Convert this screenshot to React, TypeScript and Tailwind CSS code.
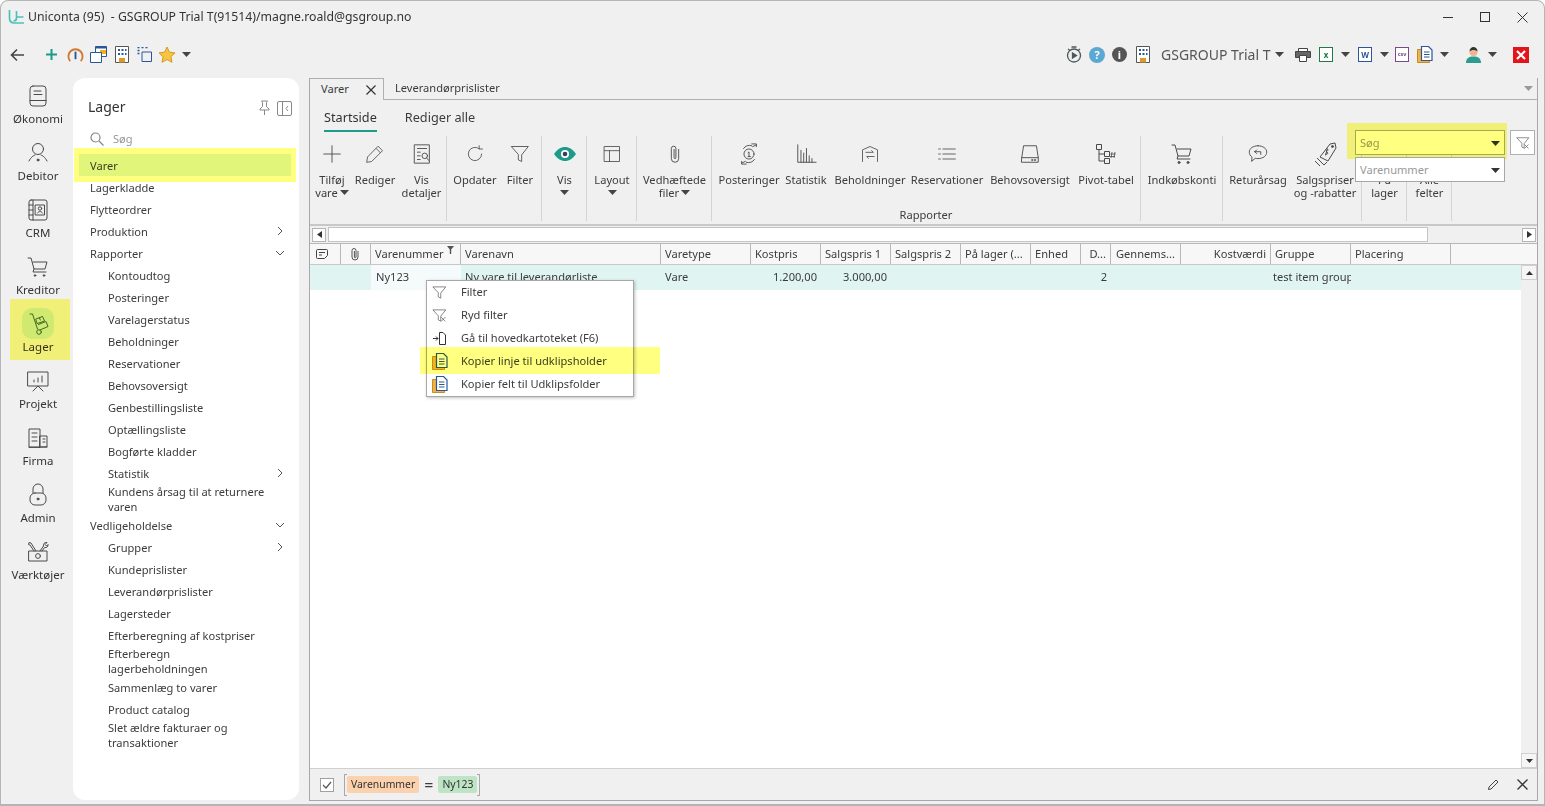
import React from "react";

type SP = { s?: number; c?: string; sw?: number; children: React.ReactNode };
const S = ({ s = 24, c = "#4a4a4a", sw = 1, children }: SP) => (
  <svg width={s} height={s} viewBox="0 0 24 24" fill="none" stroke={c} strokeWidth={sw} strokeLinecap="round" strokeLinejoin="round" className="shrink-0">
    {children}
  </svg>
);
const Caret = ({ c = "#444" }: { c?: string }) => (
  <svg width="9" height="5" viewBox="0 0 9 5" className="shrink-0"><path d="M0 0h9L4.500 5z" fill={c} /></svg>
);
const Chev = ({ down }: { down?: boolean }) => (
  <svg width="10" height="10" viewBox="0 0 10 10" fill="none" stroke="#555" strokeWidth="1">
    {down ? <path d="M1 3l4 4 4-4" /> : <path d="M3 1l4 4-4 4" />}
  </svg>
);
const Funnel = ({ s = 20, x }: { s?: number; x?: boolean }) => (
  <S s={s} c="#444">
    <path d="M2 3h20l-8 10v8l-4-2v-6z" />
    {x && <path d="M15 15l6 6M21 15l-6 6" />}
  </S>
);
const CopyDoc = () => (
  <svg width="16" height="17" viewBox="0 0 16 17" className="shrink-0">
    <path d="M.500 3.500h5v11h7v2h-12z" fill="#eeb44a" stroke="#c98a1f" strokeWidth="1" />
    <path d="M4.500 .500h7l3.500 3.500v10.500h-10.500z" fill="#fff" stroke="#2b579a" strokeWidth="1.200" />
    <path d="M7 6h5.500M7 8.500h5.500M7 11h5.500" stroke="#2b579a" strokeWidth="1" />
  </svg>
);
const Building = () => (
  <svg width="14" height="17" viewBox="0 0 14 17" className="shrink-0">
    <path d="M.500 .500h13v16h-13z" fill="#fff" stroke="#555" />
    <path d="M3 3h2v2H3zM6.500 3h2v2h-2zM10 3h1.500v2H10zM3 7h2v2H3zM6.500 7h2v2h-2zM10 7h1.500v2H10z" fill="#2b579a" />
    <path d="M4 12h6v4.500H4z" fill="#d99a2b" />
  </svg>
);

const railIcons: Record<string, React.ReactNode> = {
  "Økonomi": <><rect x="4" y="2" width="16" height="20" rx="3" /><path d="M4 16.500h16M8 7h7M8 10.500h8" /></>,
  Debitor: <><circle cx="12" cy="8" r="5.500" /><path d="M3 20c2-4 4.500-5.500 6-6M21 20c-2-4-4.500-5.500-6-6" /><circle cx="12" cy="19" r="1" fill="#555" /></>,
  CRM: <><rect x="3" y="2" width="18" height="20" rx="2" /><path d="M7 2v20M3 7h4M3 12h4M3 17h4" /><rect x="9.500" y="7" width="9" height="10" /><circle cx="14" cy="10.500" r="1.700" /><path d="M11.500 15c1-2 4-2 5 0" /></>,
  Kreditor: <><path d="M2 3h3l3 11h11l2-7H7" /><path d="M8 14l-1 3h13" /><circle cx="9" cy="20.500" r=".8" fill="#555" /><circle cx="18" cy="20.500" r=".8" fill="#555" /></>,
  Lager: <><path d="M4 2h2.500l5 15" /><circle cx="13" cy="20" r="2.300" /><path d="M10 7l6.500-2.500 2 4.500-7 2.500zM12.500 12.500l7.500-3 2 5-8 3.500" /><path d="M13.500 6l.8 2" /></>,
  Projekt: <><rect x="2" y="3" width="20" height="14" /><path d="M8 13v-2M12 13V9M16 13V7M7 22l5-5 5 5" /></>,
  Firma: <><path d="M3 21V3h11v18zM14 10h7v11h-7zM3 21h18M6 7h5M6 11h5M6 15h5M17 13h2M17 16h2" /></>,
  Admin: <><rect x="4" y="10" width="16" height="12" rx="5" /><path d="M7 10V6a5 5 0 0 1 10 0v4" /><circle cx="12" cy="16" r="1" fill="#555" /></>,
  "Værktøjer": <><path d="M3 11h18v10H3z" /><circle cx="12" cy="16" r="2.400" /><path d="M8 11L4 5l-1.500-.5L3 2.500l2 .5 5 8M14 11l3.500-5c-.5-2 1-4 3.500-3.500L19 4.500l1.500 1.500 1.500-1.500c.5 2-1.500 3.500-3.500 3L16 11" /></>,
};

const RailItem = ({ name }: { name: string }) => (
  <div className="flex flex-col items-center h-[57px]">
    {name === "Lager" ? (
      <div className="w-8 h-[31px] rounded-[10px] bg-[#cfe9e2] flex items-center justify-center mt-[1px]"><S c="#3f6a4a" s={24}>{railIcons[name]}</S></div>
    ) : (
      <div className="h-[31px] flex items-center mt-[1px]"><S>{railIcons[name]}</S></div>
    )}
    <span className="leading-4 text-[11.500px] text-[#333]">{name}</span>
  </div>
);

const nav: { t: string; i?: number; h?: number; w?: number; a?: "r" | "d" }[] = [
  { t: "Varer" }, { t: "Lagerkladde" }, { t: "Flytteordrer" }, { t: "Produktion", a: "r" }, { t: "Rapporter", a: "d" },
  { t: "Kontoudtog", i: 1 }, { t: "Posteringer", i: 1 }, { t: "Varelagerstatus", i: 1 }, { t: "Beholdninger", i: 1 },
  { t: "Reservationer", i: 1 }, { t: "Behovsoversigt", i: 1 }, { t: "Genbestillingsliste", i: 1 }, { t: "Optællingsliste", i: 1 },
  { t: "Bogførte kladder", i: 1 }, { t: "Statistik", i: 1, a: "r" }, { t: "Kundens årsag til at returnere varen", i: 1, h: 30, w: 170 },
  { t: "Vedligeholdelse", a: "d" }, { t: "Grupper", i: 1, a: "r" }, { t: "Kundeprislister", i: 1 }, { t: "Leverandørprislister", i: 1 },
  { t: "Lagersteder", i: 1 }, { t: "Efterberegning af kostpriser", i: 1 }, { t: "Efterberegn lagerbeholdningen", i: 1, h: 30, w: 120 },
  { t: "Sammenlæg to varer", i: 1 }, { t: "Product catalog", i: 1 }, { t: "Slet ældre fakturaer og transaktioner", i: 1, h: 30, w: 170 },
];

const Item = ({ w, icon, l1, l2, caret }: { w: number; icon: React.ReactNode; l1: string; l2?: string; caret?: "inline" | "below" }) => (
  <div className="flex flex-col items-center shrink-0" style={{ width: w }}>
    <div className="h-[24px] flex items-center justify-center">{icon}</div>
    <div className="mt-[7px] leading-[13px] whitespace-nowrap text-center">{l1}</div>
    {l2 && (
      <div className="leading-[13px] whitespace-nowrap flex items-center gap-[2px]">
        {l2}
        {caret === "inline" && <Caret />}
      </div>
    )}
    {caret === "below" && <div className="mt-[4px]"><Caret /></div>}
  </div>
);

const Group = ({ w, children, label }: { w: number; children: React.ReactNode; label?: string }) => (
  <div className="relative h-[85px] mt-[1px] border-r border-[#d4d4d4] shrink-0 flex pt-[6px]" style={{ width: w }}>
    {children}
    {label && <div className="absolute left-0 right-0 bottom-0 text-center leading-[13px]">{label}</div>}
  </div>
);

const columns: { t: string; w: number; r?: boolean; c?: boolean }[] = [
  { t: "", w: 31 }, { t: "", w: 30 }, { t: "Varenummer", w: 90 }, { t: "Varenavn", w: 200 }, { t: "Varetype", w: 90 },
  { t: "Kostpris", w: 70 }, { t: "Salgspris 1", w: 70 }, { t: "Salgspris 2", w: 70 }, { t: "På lager (...", w: 70 }, { t: "Enhed", w: 50 },
  { t: "D...", w: 30, r: true }, { t: "Gennems...", w: 70, c: true }, { t: "Kostværdi", w: 90, r: true }, { t: "Gruppe", w: 80 }, { t: "Placering", w: 100 },
];
const row: { t: string; w: number; r?: boolean; bg?: string; pl?: number }[] = [
  { t: "", w: 61 }, { t: "Ny123", w: 90, bg: "bg-[#f4fbfa]", pl: 5 }, { t: "Ny vare til leverandørliste", w: 200 }, { t: "Vare", w: 90 },
  { t: "1.200,00", w: 70, r: true }, { t: "3.000,00", w: 70, r: true }, { t: "", w: 70 }, { t: "", w: 70 }, { t: "", w: 50 },
  { t: "2", w: 30, r: true }, { t: "", w: 70 }, { t: "", w: 90 }, { t: "test item group", w: 80, pl: 2 }, { t: "", w: 100 },
];

const menu: { t: string; icon: React.ReactNode }[] = [
  { t: "Filter", icon: <Funnel s={15} /> },
  { t: "Ryd filter", icon: <Funnel s={15} x /> },
  {
    t: "Gå til hovedkartoteket (F6)",
    icon: (
      <svg width="15" height="15" viewBox="0 0 15 15" fill="none" stroke="#333">
        <path d="M1 7.500h5M4 5.500l2 2-2 2M7.500 13.500v-12h3.500l2.500 2.500v9.500z" />
      </svg>
    ),
  },
  { t: "Kopier linje til udklipsholder", icon: <CopyDoc /> },
  { t: "Kopier felt til Udklipsfolder", icon: <CopyDoc /> },
];

export default function App() {
  return (
    <div className="relative w-[1545px] h-[806px] overflow-hidden bg-white text-[11.100px] text-[#3c3c3c]" style={{ fontFamily: '"Noto Sans", sans-serif' }}>
      <div className="w-full h-full flex flex-col bg-[#f0f0f0] border border-[#b5b5b5] border-b-[2px] rounded-t-[8px]">
        {/* title bar */}
        <div className="h-[32px] shrink-0 flex items-center pl-[7px] pr-[16px]">
          <svg width="17" height="17" viewBox="0 0 17 17" fill="none" stroke="#4fc0b8" strokeWidth="1.700" className="shrink-0">
            <path d="M1.500 1v8c0 3 2 5 5 5h9.500M8.500 2v7c0 2-1 3-3 3M8.500 8h7" />
          </svg>
          <span className="ml-[3px] text-[12.250px] whitespace-pre text-[#333]">Uniconta (95)  - GSGROUP Trial T(91514)/magne.roald@gsgroup.no</span>
          <div className="ml-auto flex items-center gap-[27px]">
            <div className="w-[10px] h-px bg-[#333]" />
            <div className="w-[10px] h-[10px] border border-[#333]" />
            <svg width="11" height="11" viewBox="0 0 11 11" stroke="#333" strokeWidth="1"><path d="M.500 .500l10 10M10.500 .500l-10 10" /></svg>
          </div>
        </div>
        {/* toolbar */}
        <div className="h-[45px] shrink-0 flex items-center pl-[9px] pr-[15px] pb-[2px]">
          <svg width="15" height="14" viewBox="0 0 15 14" fill="none" stroke="#444" strokeWidth="1.600"><path d="M14 7H2M7 1.500L1.500 7 7 12.500" /></svg>
          <div className="ml-[20px] flex items-center">
            <svg width="13" height="13" viewBox="0 0 13 13" stroke="#1d9a8a" strokeWidth="2"><path d="M6.500 1v11M1 6.500h11" /></svg>
            <svg width="17" height="17" viewBox="0 0 18 18" fill="none" className="ml-[9px]"><path d="M3.500 16A7.500 7.500 0 1 1 14.500 16" stroke="#d07a2d" strokeWidth="2" /><path d="M9 6v8" stroke="#2b579a" strokeWidth="2" /></svg>
            <svg width="17" height="17" viewBox="0 0 17 17" className="ml-[6px]"><path d="M5.500 .500h11v10h-11z" fill="#fff" stroke="#2b579a" /><path d="M5.500 .500h11v2h-11z" fill="#2b579a" /><path d="M10 4h6v4h-6z" fill="#f2b01e" /><path d="M.500 6.500h11v10h-11z" fill="#fff" stroke="#2b579a" /></svg>
            <div className="ml-[8px]"><Building /></div>
            <svg width="15" height="15" viewBox="0 0 15 15" fill="none" stroke="#2b579a" className="ml-[8px]"><path d="M5 5h9.500v9.500H5z" /><path d="M.500 .500h2M4.500 .500h2M8.500 .500h2M.500 3.500h2M.500 6.500h2" strokeWidth="1.500" /></svg>
            <svg width="18" height="18" viewBox="0 0 18 18" className="ml-[6px]"><path d="M9 1l2.400 5.200 5.600.7-4.100 3.800 1.100 5.600L9 13.500l-5 2.800 1.100-5.600L1 6.900l5.600-.7z" fill="#f6c544" stroke="#d69a1c" /></svg>
            <div className="ml-[6px]"><Caret /></div>
          </div>
          <div className="ml-auto flex items-center">
            <svg width="16" height="17" viewBox="0 0 16 17" fill="none" stroke="#4a5a5a" strokeWidth="1.300"><circle cx="8" cy="9.500" r="6.500" /><path d="M5.500 1h5M2 3l2 1.500M14 3l-2 1.500" /><path d="M6.500 7l4 2.500-4 2.500z" fill="#4a5a5a" /></svg>
            <div className="ml-[7px] w-[16px] h-[16px] rounded-full bg-[#5ba8d2] text-white text-[11px] font-bold flex items-center justify-center leading-none">?</div>
            <div className="ml-[7px] w-[15px] h-[15px] rounded-full bg-[#555] text-white text-[11px] font-bold flex items-center justify-center leading-none">i</div>
            <div className="ml-[9px]"><Building /></div>
            <span className="ml-[11px] text-[14px] text-[#555] whitespace-nowrap w-[109px]">GSGROUP Trial T</span>
            <div className="ml-[5px]"><Caret /></div>
            <svg width="16" height="14" viewBox="0 0 16 14" className="ml-[11px]"><path d="M3.500 3V.500h9V3" fill="#fff" stroke="#444" /><path d="M.500 3.500h15v6h-15z" fill="#666" stroke="#444" /><path d="M4.500 7.500h7v6h-7z" fill="#fff" stroke="#444" /></svg>
            <div className="ml-[8px] w-[14px] h-[15px] border border-[#1f7a45] bg-white text-[#1f7a45] text-[8px] font-bold flex items-center justify-center leading-none">x</div>
            <div className="ml-[8px]"><Caret /></div>
            <div className="ml-[8px] w-[14px] h-[15px] border border-[#2b579a] bg-white text-[#2b579a] text-[8px] font-bold flex items-center justify-center leading-none">W</div>
            <div className="ml-[8px]"><Caret /></div>
            <div className="ml-[6px] w-[14px] h-[15px] border border-[#7a4a8a] bg-white text-[#7a4a8a] text-[5.500px] font-bold flex items-center justify-center leading-none">csv</div>
            <div className="ml-[8px]"><CopyDoc /></div>
            <div className="ml-[7px]"><Caret /></div>
            <svg width="15" height="16" viewBox="0 0 15 16" className="ml-[17px]"><path d="M0 16c0-5 3-6.500 7.500-6.500S15 11 15 16z" fill="#2a9d8f" /><circle cx="7.500" cy="5" r="4" fill="#eeb592" /><path d="M3.500 4.500c0-3 2-4.500 4-4.500s4 1.500 4 4.500c-2-2-6-2-8 0z" fill="#333" /></svg>
            <div className="ml-[7px]"><Caret /></div>
            <div className="ml-[16px] w-[16px] h-[16px] bg-[#e3151a] flex items-center justify-center">
              <svg width="10" height="10" viewBox="0 0 10 10" stroke="#fff" strokeWidth="2.200"><path d="M1 1l8 8M9 1L1 9" /></svg>
            </div>
          </div>
        </div>

        {/* body */}
        <div className="flex-1 min-h-0 flex">
          {/* rail */}
          <div className="w-[72px] shrink-0 flex flex-col items-center pt-[1px] pl-[2px]">
            {["Økonomi", "Debitor", "CRM", "Kreditor", "Lager", "Projekt", "Firma", "Admin", "Værktøjer"].map((n) => (
              <RailItem key={n} name={n} />
            ))}
          </div>
          {/* nav panel */}
          <div className="w-[226px] shrink-0 mb-[4px] bg-white rounded-[12px] flex flex-col">
            <div className="h-[46px] flex items-end pb-[7px] pl-[15px] pr-[7px]">
              <span className="text-[14px] leading-[20px] text-[#333]">Lager</span>
              <div className="ml-auto flex items-center gap-[5px] mb-[1px]">
                <svg width="15" height="16" viewBox="0 0 15 16" fill="none" stroke="#888"><path d="M4.500 1h6l-1 1.500v4l2.500 2.500v1H3v-1l2.500-2.500v-4zM7.500 10v5" /></svg>
                <svg width="15" height="15" viewBox="0 0 15 15" fill="none" stroke="#888"><rect x=".5" y=".5" width="14" height="14" rx="1.500" /><path d="M5.500 .5v14M11 5l-2 2.500 2 2.500" /></svg>
              </div>
            </div>
            <div className="h-[30px] flex items-center pl-[17px] gap-[9px] text-[#999]">
              <svg width="14" height="14" viewBox="0 0 14 14" fill="none" stroke="#888" strokeWidth="1.200"><circle cx="5.500" cy="5.500" r="4.500" /><path d="M9 9l4.500 4.500" /></svg>
              <span>Søg</span>
            </div>
            <div className="pl-[6px] pr-[8px] flex-1">
              {nav.map((n) => (
                <div
                  key={n.t}
                  className={`flex items-center pr-[6px] ${n.t === "Varer" ? "bg-[#e0f5f2]" : ""}`}
                  style={{ height: n.h ?? 22, paddingLeft: n.i ? 29 : 11 }}
                >
                  <span className="leading-[15px]" style={{ width: n.w }}>{n.t}</span>
                  {n.a && <span className="ml-auto"><Chev down={n.a === "d"} /></span>}
                </div>
              ))}
            </div>
          </div>

          {/* main */}
          <div className="ml-[10px] w-[1229px] shrink-0 mb-[3px] flex flex-col border border-[#a8a8a8] border-t-0">
            <div className="h-[22px] shrink-0 flex border-b border-[#b0b0b0] relative">
              <div className="w-[74px] h-[22px] border border-[#b0b0b0] border-b-0 border-l-0 bg-[#f0f0f0] flex items-center pl-[11px] relative z-10">
                Varer
                <svg width="10" height="10" viewBox="0 0 10 10" stroke="#333" strokeWidth="1.200" className="ml-auto mr-[7px]"><path d="M.5 .500l9 9M9.500 .500l-9 9" /></svg>
              </div>
              <div className="flex items-center pl-[11px]">Leverandørprislister</div>
              <div className="ml-auto mr-[4px] mt-[8px]"><Caret c="#999" /></div>
            </div>
            <div className="h-[35px] shrink-0 flex pl-[14px] gap-[28px] text-[12.700px] pt-[7px]">
              <div className="h-[25px] border-b-[2px] border-[#1d9a8a] text-[#333] leading-[20px]">Startside</div>
              <div className="leading-[20px]">Rediger alle</div>
            </div>
            {/* ribbon */}
            <div className="h-[91px] shrink-0 flex items-start border-b-2 border-[#c8c8c8]">
              <Group w={137}>
                <Item w={44} icon={<S s={22}><path d="M12 3v18M3 12h18" /></S>} l1="Tilføj" l2="vare" caret="inline" />
                <Item w={42} icon={<S s={20}><path d="M16 3l5 5L8 21l-6 1 1-6zM13.500 5.500l5 5" /></S>} l1="Rediger" />
                <Item w={51} icon={<S s={22}><path d="M4 2h16v20H4zM7 6h10M7 10h3M7 14h3M7 18h3" /><circle cx="15" cy="14" r="3" /><path d="M17 16.500l3 3" /></S>} l1="Vis" l2="detaljer" />
              </Group>
              <Group w={95}>
                <Item w={56} icon={<S s={20}><path d="M20 12a8 8 0 1 1-3-6.300M17 2v4h4" /></S>} l1="Opdater" />
                <Item w={34} icon={<Funnel s={20} />} l1="Filter" />
              </Group>
              <Group w={45}>
                <Item w={45} icon={<svg width="22" height="14" viewBox="0 0 22 14"><path d="M0 7c3-4.500 7-7 11-7s8 2.500 11 7c-3 4.500-7 7-11 7S3 11.500 0 7z" fill="#1d9a8a" /><circle cx="11" cy="7" r="4" fill="#fff" /><circle cx="11" cy="7" r="2.300" fill="#3a3a5a" /></svg>} l1="Vis" caret="below" />
              </Group>
              <Group w={50}>
                <Item w={50} icon={<S s={20}><rect x="3" y="3" width="18" height="18" /><path d="M3 8h18M9 8v13" /></S>} l1="Layout" caret="below" />
              </Group>
              <Group w={75}>
                <Item w={75} icon={<S s={22}><path d="M16 7v10a4 4 0 0 1-8 0V6a2.500 2.500 0 0 1 5 0v10a1 1 0 0 1-2 0V7" /></S>} l1="Vedhæftede" l2="filer" caret="inline" />
              </Group>
              <Group w={429} label="Rapporter">
                <Item w={74} icon={<S s={22}><circle cx="12" cy="12" r="5.500" /><path d="M11 10.500l1-.8v5M11 14.700h2.500M6 6a8 8 0 0 1 9-3M15 1h5v3M20 2l-4 2M18 18a8 8 0 0 1-9 3M9 23H4v-3M4 22l4-2" /></S>} l1="Posteringer" />
                <Item w={40} icon={<S s={22}><path d="M3 2v19h20M6.500 21V8M9.500 21V11M12.500 21V6M15.500 21v-7M18.500 21v-4" /></S>} l1="Statistik" />
                <Item w={88} icon={<S s={20}><path d="M3 21V7l9-4 9 4v14" /><path d="M7 10h9l-2-2M17 15H8l2 2" /></S>} l1="Beholdninger" />
                <Item w={66} icon={<S s={20}><path d="M7 6h15M7 12h15M7 18h15M2 6h2M2 12h2M2 18h2" /></S>} l1="Reservationer" />
                <Item w={100} icon={<S s={22}><path d="M3 21h18V16l-2-13H5L3 16zM3 16h18" /><path d="M14 18.500h1M17 18.500h1" strokeWidth="1.500" /></S>} l1="Behovsoversigt" />
                <Item w={52} icon={<svg width="22" height="20" viewBox="0 0 22 20" fill="none" stroke="#4a4a4a"><path d="M1.500 .5h5v5h-5zM9.500 7.500h5v5h-5zM9.500 14.500h5v5h-5zM4 5.500v11.500h5.500M4 10h5.500" /><path d="M17 8l-1 6M20 8l-1 6M15.500 10h5M15 12.500h5" strokeWidth=".8" /></svg>} l1="Pivot-tabel" />
              </Group>
              <Group w={82}>
                <Item w={82} icon={<S s={24}><path d="M2 3h3l3 11h11l2-7H7" /><path d="M8 14l-1 3h13" /><circle cx="9" cy="20.500" r="1" fill="#555" /><circle cx="18" cy="20.500" r="1" fill="#555" /></S>} l1="Indkøbskonti" />
              </Group>
              <Group w={139}>
                <Item w={70} icon={<S s={22}><path d="M12 3c5.500 0 9.500 3 9.500 7s-4 7-9.500 7c-1 0-2 0-3-.3L5 20l.5-4.500C3.500 14 2.500 12 2.500 10c0-4 4-7 9.500-7zM8.500 9.500h6.500v3M8.500 9.500l2-2M8.500 9.500l2 2" /></S>} l1="Returårsag" />
                <Item w={64} icon={<svg width="24" height="26" viewBox="0 0 24 26" fill="none" stroke="#4a4a4a"><path d="M7 16L17 3l5-1 1 5-8 13z" /><path d="M4 17l7 7 3-3M2 20l5 5" /><circle cx="19.500" cy="5.500" r="1" fill="#4a4a4a" /><path d="M15.500 9c-2-1-3 1-1.500 2s.5 3-1.500 2M14.500 7.500l-2 7" /></svg>} l1="Salgspriser" l2="og -rabatter" />
              </Group>
              <Group w={45}><Item w={45} icon={<span />} l1="På" l2="lager" /></Group>
              <Group w={45}><Item w={45} icon={<span />} l1="Alle" l2="felter" /></Group>
            </div>
            {/* grid */}
            <div className="flex-1 min-h-0 bg-white flex flex-col">
              <div className="h-[18px] shrink-0 flex items-center bg-[#f0f0f0] border-b border-[#b8b8b8] pl-[2px] pr-[1px]">
                <div className="w-[14px] h-[14px] border border-[#b5b5b5] bg-white flex items-center justify-center"><svg width="5" height="7" viewBox="0 0 5 7"><path d="M5 0v7L0 3.500z" fill="#333" /></svg></div>
                <div className="ml-[2px] w-[1100px] h-[15px] bg-white border border-[#c4c4c4]" />
                <div className="ml-auto w-[14px] h-[14px] border border-[#b5b5b5] bg-white flex items-center justify-center"><svg width="5" height="7" viewBox="0 0 5 7"><path d="M0 0v7l5-3.500z" fill="#333" /></svg></div>
              </div>
              <div className="h-[21px] shrink-0 flex bg-[#f7f7f7] border-b border-[#c8c8c8]">
                {columns.map((c, i) => (
                  <div key={i} className={`h-full shrink-0 border-r border-[#b8b8b8] flex items-center px-[4px] whitespace-nowrap overflow-hidden relative ${c.r ? "justify-end" : ""} ${c.c ? "justify-center" : ""}`} style={{ width: c.w }}>
                    {i === 0 && <svg width="14" height="14" viewBox="0 0 14 14" fill="none" stroke="#444" className="ml-[1px]"><path d="M1.500 3.500a1 1 0 0 1 1-1h9a1 1 0 0 1 1 1v5l-3 3h-7a1 1 0 0 1-1-1zM4 5.500h6M4 8h3" /></svg>}
                    {i === 1 && <svg width="14" height="14" viewBox="0 0 14 14" fill="none" stroke="#555" className="ml-[3px]"><path d="M10 4v6a3 3 0 0 1-6 0V3.500a2 2 0 0 1 4 0V10a.8.8 0 0 1-1.600 0V4" /></svg>}
                    {c.t}
                    {i === 2 && <svg width="7" height="8" viewBox="0 0 7 8" className="absolute right-[6px] top-[2px]"><path d="M0 0h7L4.200 3.500V8H2.800V3.500z" fill="#555" /></svg>}
                  </div>
                ))}
              </div>
              <div className="flex-1 min-h-0 flex">
                <div className="flex-1 min-w-0">
                  <div className="h-[25px] flex bg-[#e0f5f2]">
                    {row.map((c, i) => (
                      <div key={i} className={`h-full shrink-0 flex items-center px-[4px] whitespace-nowrap overflow-hidden ${c.r ? "justify-end" : ""} ${c.bg ?? ""}`} style={{ width: c.w, paddingLeft: c.pl }}>
                        {c.t}
                      </div>
                    ))}
                  </div>
                </div>
                <div className="w-[16px] shrink-0 bg-[#f0f0f0] flex flex-col justify-between">
                  <div className="h-[15px] border border-[#d0d0d0] bg-[#f5f5f5] flex items-center justify-center"><svg width="7" height="4" viewBox="0 0 7 4"><path d="M0 4h7L3.500 0z" fill="#333" /></svg></div>
                  <div className="h-[15px] border border-[#d0d0d0] bg-[#f5f5f5] flex items-center justify-center"><svg width="7" height="4" viewBox="0 0 7 4"><path d="M0 0h7L3.500 4z" fill="#333" /></svg></div>
                </div>
              </div>
              <div className="h-[32px] shrink-0 border-t border-[#d0d0d0] bg-[#f0f0f0] flex items-center pl-[10px] pr-[9px]">
                <div className="w-[14px] h-[14px] border border-[#a0a0a0] bg-white flex items-center justify-center">
                  <svg width="10" height="8" viewBox="0 0 10 8" fill="none" stroke="#555" strokeWidth="1.200"><path d="M1 4l3 3 5-6" /></svg>
                </div>
                <div className="ml-[10px] w-[3px] h-[22px] border border-r-0 border-[#a8a8a8]" />
                <div className="h-[17px] px-[4px] bg-[#fbd2ad] rounded-[2px] flex items-center text-[#333] text-[10.400px]">Varenummer</div>
                <span className="mx-[5px] text-[16px] leading-none">=</span>
                <div className="h-[17px] px-[4px] bg-[#bde4c5] rounded-[2px] flex items-center text-[#333] text-[10.400px]">Ny123</div>
                <div className="w-[3px] h-[22px] border border-l-0 border-[#a8a8a8]" />
                <svg width="11" height="11" viewBox="0 0 11 11" fill="none" stroke="#444" className="ml-auto"><path d="M8 1l2 2-7 7-2.500.5L1 8z" /></svg>
                <svg width="11" height="11" viewBox="0 0 11 11" stroke="#333" strokeWidth="1.300" className="ml-[18px]"><path d="M.5 .500l10 10M10.500 .500l-10 10" /></svg>
              </div>
            </div>
          </div>
        </div>
      </div>

      {/* context menu */}
      <div className="absolute left-[426px] top-[280px] w-[208px] h-[117px] bg-white border border-[#a8a8a8] shadow-[1px_1px_3px_rgba(0,0,0,0.25)]">
        {menu.map((m) => (
          <div key={m.t} className="h-[23px] flex items-center pb-[1px]">
            <div className="w-[34px] flex justify-start pl-[5px]">{m.icon}</div>
            <span>{m.t}</span>
          </div>
        ))}
      </div>

      {/* search fields over ribbon */}
      <div className="absolute left-[1355px] top-[130px] w-[150px] h-[25px] bg-white border border-[#a8a8a8] flex items-center pl-[4px] pr-[4px] pt-[1px] text-[#999]">
        Søg<div className="ml-auto"><Caret c="#333" /></div>
      </div>
      <div className="absolute left-[1510px] top-[130px] w-[25px] h-[25px] bg-white border border-[#b0b0b0] flex items-center justify-center"><Funnel s={14} x /></div>

      {/* yellow marker highlights */}
      <div className="absolute left-[74px] top-[148px] w-[222px] h-[34px] bg-[#ffff80] mix-blend-multiply" />
      <div className="absolute left-[10px] top-[299px] w-[60px] h-[61px] bg-[#ffff80] mix-blend-multiply" />
      <div className="absolute left-[420px] top-[347px] w-[240px] h-[27px] bg-[#ffff80] mix-blend-multiply" />
      <div className="absolute left-[1347px] top-[123px] w-[160px] h-[36px] bg-[#ffff80] mix-blend-multiply" />

      <div className="absolute left-[1355px] top-[157px] w-[150px] h-[25px] bg-white border border-[#a8a8a8] flex items-center pl-[4px] pr-[4px] pt-[1px] text-[#999]">
        Varenummer<div className="ml-auto"><Caret c="#333" /></div>
      </div>
    </div>
  );
}
